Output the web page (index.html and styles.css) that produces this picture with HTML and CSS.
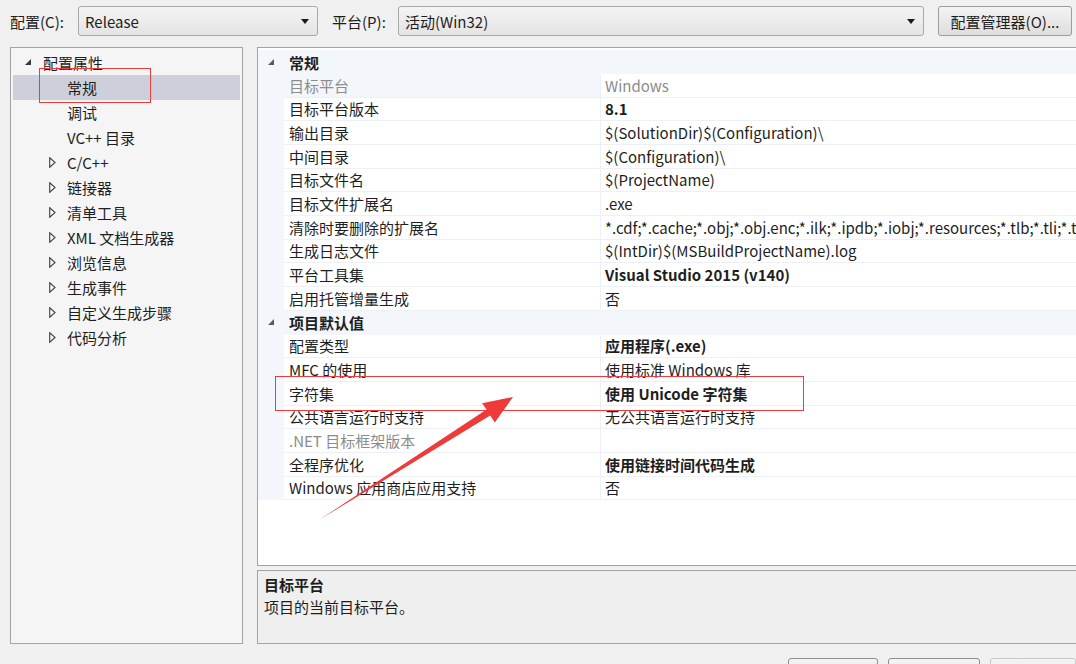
FILE: index.html
```html
<!DOCTYPE html>
<html lang="zh-CN">
<head>
<meta charset="utf-8">
<title>属性页</title>
<link rel="stylesheet" href="styles.css">
</head>
<body>
<div class="page">
  <div class="topbar">
    <span class="lbl lbl-config">配置(C):</span>
    <div class="combo combo-config"><span>Release</span><svg class="drop" width="8" height="5" viewBox="0 0 8 5"><polygon points="0,0 8,0 4,5" fill="#1a1a1a"/></svg></div>
    <span class="lbl lbl-platform">平台(P):</span>
    <div class="combo combo-platform"><span>活动(Win32)</span><svg class="drop" width="8" height="5" viewBox="0 0 8 5"><polygon points="0,0 8,0 4,5" fill="#1a1a1a"/></svg></div>
    <div class="btn btn-mgr">配置管理器(O)...</div>
  </div>

  <div class="main">
    <div class="tree">
      <div class="trow lv0"><span class="exp"><svg width="7" height="7" viewBox="0 0 7 7"><polygon points="6,0 6,6 0,6" fill="#3a3a3a"/></svg></span><span>配置属性</span></div>
      <div class="trow lv1 selected"><span class="exp"></span><span>常规</span></div>
      <div class="trow lv1"><span class="exp"></span><span>调试</span></div>
      <div class="trow lv1"><span class="exp"></span><span>VC++ 目录</span></div>
      <div class="trow lv1"><span class="exp"><svg width="7" height="11" viewBox="0 0 7 11"><polygon points="0.7,0.7 6,5.5 0.7,10.3" fill="#fff" stroke="#4a4a4a" stroke-width="1.2"/></svg></span><span>C/C++</span></div>
      <div class="trow lv1"><span class="exp"><svg width="7" height="11" viewBox="0 0 7 11"><polygon points="0.7,0.7 6,5.5 0.7,10.3" fill="#fff" stroke="#4a4a4a" stroke-width="1.2"/></svg></span><span>链接器</span></div>
      <div class="trow lv1"><span class="exp"><svg width="7" height="11" viewBox="0 0 7 11"><polygon points="0.7,0.7 6,5.5 0.7,10.3" fill="#fff" stroke="#4a4a4a" stroke-width="1.2"/></svg></span><span>清单工具</span></div>
      <div class="trow lv1"><span class="exp"><svg width="7" height="11" viewBox="0 0 7 11"><polygon points="0.7,0.7 6,5.5 0.7,10.3" fill="#fff" stroke="#4a4a4a" stroke-width="1.2"/></svg></span><span>XML 文档生成器</span></div>
      <div class="trow lv1"><span class="exp"><svg width="7" height="11" viewBox="0 0 7 11"><polygon points="0.7,0.7 6,5.5 0.7,10.3" fill="#fff" stroke="#4a4a4a" stroke-width="1.2"/></svg></span><span>浏览信息</span></div>
      <div class="trow lv1"><span class="exp"><svg width="7" height="11" viewBox="0 0 7 11"><polygon points="0.7,0.7 6,5.5 0.7,10.3" fill="#fff" stroke="#4a4a4a" stroke-width="1.2"/></svg></span><span>生成事件</span></div>
      <div class="trow lv1"><span class="exp"><svg width="7" height="11" viewBox="0 0 7 11"><polygon points="0.7,0.7 6,5.5 0.7,10.3" fill="#fff" stroke="#4a4a4a" stroke-width="1.2"/></svg></span><span>自定义生成步骤</span></div>
      <div class="trow lv1"><span class="exp"><svg width="7" height="11" viewBox="0 0 7 11"><polygon points="0.7,0.7 6,5.5 0.7,10.3" fill="#fff" stroke="#4a4a4a" stroke-width="1.2"/></svg></span><span>代码分析</span></div>
    </div>

    <div class="right">
      <div class="pg">
        <div class="cat"><span class="gut"><svg width="7" height="7" viewBox="0 0 7 7"><polygon points="6,0 6,6 0,6" fill="#5a5a5a"/></svg></span><span class="cname">常规</span></div>
        <div class="prop sel"><span class="gut"></span><span class="pn dim">目标平台</span><span class="pv dim">Windows</span></div>
        <div class="prop"><span class="gut"></span><span class="pn">目标平台版本</span><span class="pv b">8.1</span></div>
        <div class="prop"><span class="gut"></span><span class="pn">输出目录</span><span class="pv">$(SolutionDir)$(Configuration)\</span></div>
        <div class="prop"><span class="gut"></span><span class="pn">中间目录</span><span class="pv">$(Configuration)\</span></div>
        <div class="prop"><span class="gut"></span><span class="pn">目标文件名</span><span class="pv">$(ProjectName)</span></div>
        <div class="prop"><span class="gut"></span><span class="pn">目标文件扩展名</span><span class="pv">.exe</span></div>
        <div class="prop"><span class="gut"></span><span class="pn">清除时要删除的扩展名</span><span class="pv">*.cdf;*.cache;*.obj;*.obj.enc;*.ilk;*.ipdb;*.iobj;*.resources;*.tlb;*.tli;*.tlh;*.tmp;*.rsp;*.pgc;*.pgd;*.meta;*.tlog;*.manifest;*.res;*.pch;*.exp;*.idb;*.rep;*.xdc;*.pdb;*_manifest.rc;*.bsc;*.sbr;*.xml;*.metagen;*.bi</span></div>
        <div class="prop"><span class="gut"></span><span class="pn">生成日志文件</span><span class="pv">$(IntDir)$(MSBuildProjectName).log</span></div>
        <div class="prop"><span class="gut"></span><span class="pn">平台工具集</span><span class="pv b">Visual Studio 2015 (v140)</span></div>
        <div class="prop"><span class="gut"></span><span class="pn">启用托管增量生成</span><span class="pv">否</span></div>
        <div class="cat"><span class="gut"><svg width="7" height="7" viewBox="0 0 7 7"><polygon points="6,0 6,6 0,6" fill="#5a5a5a"/></svg></span><span class="cname">项目默认值</span></div>
        <div class="prop"><span class="gut"></span><span class="pn">配置类型</span><span class="pv b">应用程序(.exe)</span></div>
        <div class="prop"><span class="gut"></span><span class="pn">MFC 的使用</span><span class="pv">使用标准 Windows 库</span></div>
        <div class="prop"><span class="gut"></span><span class="pn">字符集</span><span class="pv b">使用 Unicode 字符集</span></div>
        <div class="prop"><span class="gut"></span><span class="pn">公共语言运行时支持</span><span class="pv">无公共语言运行时支持</span></div>
        <div class="prop"><span class="gut"></span><span class="pn dim">.NET 目标框架版本</span><span class="pv"></span></div>
        <div class="prop"><span class="gut"></span><span class="pn">全程序优化</span><span class="pv b">使用链接时间代码生成</span></div>
        <div class="prop"><span class="gut"></span><span class="pn">Windows 应用商店应用支持</span><span class="pv">否</span></div>
      </div>
      <div class="desc">
        <div class="desc-title">目标平台</div>
        <div class="desc-text">项目的当前目标平台。</div>
      </div>
    </div>
  </div>

  <div class="footer">
    <div class="fbtn"></div>
    <div class="fbtn"></div>
    <div class="fbtn disabled"></div>
  </div>
</div>

<div class="mark mark-tree"></div>
<div class="mark mark-row"></div>
<svg class="arrow" width="1076" height="664" viewBox="0 0 1076 664">
  <polygon points="319,520 486.6,409.6 482,403.2 513,397 494.8,422.6 490.2,415.6" fill="#ef3a3a"/>
</svg>
</body>
</html>
```

FILE: styles.css
```css
html, body {
  margin: 0;
  padding: 0;
  overflow: hidden;
}
body {
  width: 1076px;
  height: 664px;
  background: #f0f0f0;
  font-family: "Noto Sans CJK SC", sans-serif;
  font-size: 15px;
  color: #1e1e1e;
}
.page {
  width: 1076px;
  height: 664px;
  overflow: hidden;
}

/* top bar */
.topbar {
  display: flex;
  align-items: center;
  padding: 6px 0 0 10px;
  height: 30px;
}
.lbl {
  flex-shrink: 0;
  white-space: nowrap;
}
.lbl-config { width: 68px; }
.lbl-platform { width: 66px; margin-left: 14px; }
.combo {
  box-sizing: border-box;
  height: 30px;
  border: 1px solid #a9a9a9;
  border-radius: 3px;
  background: linear-gradient(#f4f4f4, #e4e4e4);
  display: flex;
  align-items: center;
  justify-content: space-between;
  padding: 0 8px 0 6px;
  flex-shrink: 0;
}
.combo-config { width: 240px; }
.combo-platform { width: 526px; }
.btn {
  box-sizing: border-box;
  height: 30px;
  width: 134px;
  margin-left: 14px;
  border: 1px solid #9c9c9c;
  border-radius: 3px;
  background: linear-gradient(#f3f3f3, #dedede);
  display: flex;
  align-items: center;
  justify-content: center;
  flex-shrink: 0;
}

/* main area */
.main {
  display: flex;
  gap: 14px;
  margin-top: 11px;
  padding-left: 10px;
  height: 597px;
}
.tree {
  box-sizing: border-box;
  width: 233px;
  height: 597px;
  flex-shrink: 0;
  background: #f5f5f5;
  border: 1px solid #a3a3a3;
  padding: 2px 2px;
}
.trow {
  display: flex;
  align-items: center;
  height: 25px;
  white-space: nowrap;
}
.trow.lv0 { padding-left: 6px; }
.trow.lv1 { padding-left: 30px; }
.trow.selected { background: #cdcfdb; }
.exp {
  width: 24px;
  flex-shrink: 0;
  display: flex;
  align-items: center;
  padding-left: 6px;
  box-sizing: border-box;
}
.exp svg { display: block; }

.right {
  width: 840px;
  flex-shrink: 0;
  display: flex;
  flex-direction: column;
  gap: 4px;
}
.pg {
  box-sizing: border-box;
  height: 519px;
  background: #fff;
  border: 1px solid #a3a3a3;
  border-right: none;
  padding-top: 2px;
  overflow: hidden;
}
.cat, .prop {
  display: grid;
  grid-template-columns: 26px 317px 1fr;
  white-space: nowrap;
}
.cat {
  height: 24px;
  background: #f3f6fb;
  align-items: center;
}
.cat .gut {
  padding-left: 10px;
  display: flex;
  align-items: center;
}
.cat .gut svg { display: block; }
.cname {
  grid-column: 2 / 4;
  font-weight: bold;
  padding-left: 5px;
}
.prop {
  height: 23.67px;
}
.prop .gut {
  background: #f3f6fb;
}
.pn, .pv {
  box-sizing: border-box;
  display: flex;
  align-items: center;
  border-bottom: 1px solid #edf0f4;
  overflow: hidden;
}
.pn {
  padding-left: 5px;
  border-right: 1px solid #edf0f4;
}
.pv {
  padding-left: 4px;
}
.prop.sel .pn { background: #f3f6fb; }
.dim { color: #8c8c8c; }
.b { font-weight: bold; }

.desc {
  box-sizing: border-box;
  height: 74px;
  background: #efefef;
  border: 1px solid #a3a3a3;
  border-right: none;
  padding: 3px 6px;
  line-height: 22px;
}
.desc-title { font-weight: bold; }

/* footer */
.footer {
  display: flex;
  justify-content: flex-end;
  gap: 10px;
  margin-top: 14px;
}
.fbtn {
  box-sizing: border-box;
  width: 90px;
  height: 26px;
  border: 1px solid #8f8f8f;
  border-radius: 3px;
  background: linear-gradient(#f4f4f4, #e2e2e2);
}
.fbtn:nth-child(2) { width: 92px; }
.fbtn.disabled { width: 86px; border-color: #c8c8c8; }

/* red annotations (overlay) */
.mark {
  position: absolute;
  border: 1.5px solid #ee3b3b;
  box-sizing: border-box;
}
.mark-tree { left: 39px; top: 68px; width: 112px; height: 35px; }
.mark-row { left: 275px; top: 376px; width: 529px; height: 35px; }
.arrow {
  position: absolute;
  left: 0;
  top: 0;
  pointer-events: none;
}
```
